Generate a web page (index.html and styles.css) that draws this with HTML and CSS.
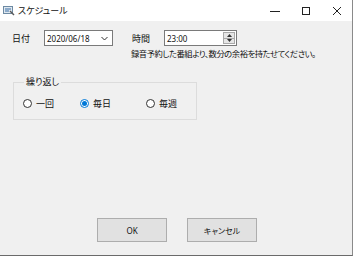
FILE: index.html
```html
<!DOCTYPE html>
<html lang="ja">
<head>
<meta charset="utf-8">
<title>スケジュール</title>
<link rel="stylesheet" href="styles.css">
</head>
<body>
<div class="window">
  <div class="titlebar">
    <svg class="appicon" width="12" height="11" viewBox="0 0 12 11">
      <rect x="0.5" y="1.5" width="9" height="7" fill="#dfe8f0" stroke="#6d8aa3"/>
      <path d="M2 4h6M2 6h4" stroke="#3a6ea5" stroke-width="1"/>
      <path d="M7 6l4 4" stroke="#5a5a5a" stroke-width="1.4"/>
    </svg>
    <span class="title">スケジュール</span>
    <div class="caption">
      <span class="cbtn"><svg width="10" height="10" viewBox="0 0 10 10"><path d="M0 5.5h10" stroke="#222" stroke-width="1"/></svg></span>
      <span class="cbtn"><svg width="10" height="10" viewBox="0 0 10 10"><rect x="1.5" y="1.5" width="7" height="7" fill="none" stroke="#222" stroke-width="1"/></svg></span>
      <span class="cbtn"><svg width="10" height="10" viewBox="0 0 10 10"><path d="M1 1l8 8M9 1l-8 8" stroke="#222" stroke-width="1"/></svg></span>
    </div>
  </div>
  <div class="content">
    <div class="row">
      <span class="label">日付</span>
      <div class="field date">
        <span class="val">2020/06/18</span>
        <svg class="chev" width="7" height="5" viewBox="0 0 7 5"><path d="M0.5 1l3 3 3-3" fill="none" stroke="#333" stroke-width="1"/></svg>
      </div>
      <span class="label label2">時間</span>
      <div class="field time">
        <span class="val">23:00</span>
        <div class="spin">
          <span class="sp"><svg width="5" height="3" viewBox="0 0 5 3"><path d="M2.5 0L5 3H0z" fill="#333"/></svg></span>
          <span class="sp"><svg width="5" height="3" viewBox="0 0 5 3"><path d="M0 0h5L2.5 3z" fill="#333"/></svg></span>
        </div>
      </div>
    </div>
    <div class="hint">録音予約した番組より、数分の余裕を持たせてください。</div>
    <div class="group">
      <span class="legend">繰り返し</span>
      <div class="radios">
        <label class="radio r1"><span class="dot"></span>一回</label>
        <label class="radio r2"><span class="dot on"></span>毎日</label>
        <label class="radio r3"><span class="dot"></span>毎週</label>
      </div>
    </div>
    <div class="buttons">
      <button class="btn">OK</button>
      <button class="btn">キャンセル</button>
    </div>
  </div>
</div>
</body>
</html>
```
FILE: styles.css
```css
html, body {
  margin: 0;
  padding: 0;
  background: #ffffff;
}
body {
  font-family: "Noto Sans", "Noto Sans CJK JP", sans-serif;
  font-size: 9px;
  color: #111;
  font-feature-settings: "palt";
}
.window {
  width: 352px;
  height: 255px;
  border-right: 1px solid #8a8a8a;
  border-bottom: 1px solid #6a6a6a;
  background: #f0f0f0;
  display: flex;
  flex-direction: column;
}
.titlebar {
  height: 21px;
  background: #ffffff;
  display: flex;
  align-items: center;
}
.appicon {
  margin-left: 3px;
  flex: none;
}
.title {
  margin-left: 3px;
  font-size: 9px;
  color: #111;
}
.caption {
  margin-left: auto;
  display: flex;
  height: 21px;
}
.cbtn {
  width: 31px;
  height: 21px;
  display: flex;
  align-items: center;
  justify-content: center;
}
.content {
  flex: 1;
  display: flex;
  flex-direction: column;
}
.row {
  display: flex;
  align-items: center;
  margin-top: 9px;
  height: 16px;
}
.label {
  width: 44px;
  padding-left: 12px;
  box-sizing: border-box;
  flex: none;
}
.label2 {
  width: 32px;
  margin-left: 19px;
  padding-left: 0;
}
.field {
  height: 16px;
  box-sizing: border-box;
  border: 1px solid #7a7a7a;
  background: #fff;
  display: flex;
  align-items: center;
  flex: none;
}
.val {
  padding-left: 2px;
  font-size: 8px;
}
.date {
  width: 69px;
}
.chev {
  margin-left: auto;
  margin-right: 4px;
}
.time {
  width: 73px;
}
.spin {
  margin-left: auto;
  margin-right: 1px;
  width: 12px;
  height: 12px;
  display: flex;
  flex-direction: column;
}
.sp {
  flex: 1;
  background: #e6e6e6;
  border: 1px solid #a8a8a8;
  display: flex;
  align-items: center;
  justify-content: center;
}
.sp + .sp {
  border-top: none;
}
.hint {
  margin-left: 131px;
  margin-top: 2px;
  line-height: 12px;
  font-size: 8.3px;
  letter-spacing: -0.45px;
  white-space: nowrap;
}
.group {
  margin: 22px 0 0 13px;
  width: 184px;
  height: 38px;
  box-sizing: border-box;
  border: 1px solid #dcdcdc;
  display: flex;
  flex-direction: column;
}
.legend {
  align-self: flex-start;
  margin: -6px 0 0 10px;
  padding: 0 2px;
  line-height: 10px;
  background: #f0f0f0;
}
.radios {
  display: flex;
  align-items: center;
  height: 10px;
  margin-top: 11px;
}
.radio {
  display: flex;
  align-items: center;
  gap: 4px;
  white-space: nowrap;
}
.r1 { margin-left: 9px; }
.r2 { margin-left: 26px; }
.r3 { margin-left: 35px; }
.dot {
  width: 9px;
  height: 9px;
  box-sizing: border-box;
  border: 1px solid #333;
  border-radius: 50%;
  background: #fff;
  display: flex;
  align-items: center;
  justify-content: center;
}
.dot.on {
  border-color: #0078d7;
}
.dot.on::after {
  content: "";
  width: 5px;
  height: 5px;
  border-radius: 50%;
  background: #0078d7;
}
.buttons {
  margin-top: auto;
  margin-bottom: 13px;
  margin-left: 97px;
  display: flex;
  gap: 20px;
}
.btn {
  width: 70px;
  height: 24px;
  background: #e1e1e1;
  border: 1px solid #adadad;
  font-family: "Noto Sans", "Noto Sans CJK JP", sans-serif;
  font-size: 8px;
  color: #111;
  padding: 0;
  font-feature-settings: "palt";
}
```
